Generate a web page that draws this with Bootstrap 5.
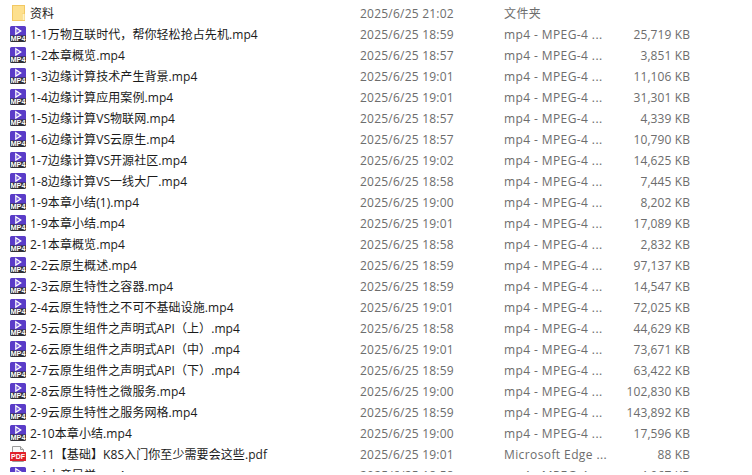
<!DOCTYPE html>
<html lang="zh-CN">
<head>
    <meta charset="UTF-8">
    <title>资料</title>
    <link href="https://cdn.jsdelivr.net/npm/bootstrap@5.3.0/dist/css/bootstrap.min.css" rel="stylesheet">
    <style>
        html, body { height: 100%; overflow: hidden; background: #fff; }
        body { font-family: "Open Sans", "Noto Sans CJK SC", sans-serif; font-size: 12px; line-height: 21px; }
        .file-list { height: 472px; overflow: hidden; padding-top: 3px; }
        .file-row { height: 21px; white-space: nowrap; }
        .file-icon { width: 16px; height: 16px; margin: 0 4px 1px 10px; flex: none; }
        .file-name { width: 330px; color: #1a1a1a; flex: none; letter-spacing: .08px; }
        .file-date { width: 144px; color: #6d6d6d; flex: none; letter-spacing: .22px; }
        .file-type { width: 116px; color: #6d6d6d; flex: none; letter-spacing: .4px; }
        .file-size { width: 70px; color: #6d6d6d; text-align: right; flex: none; letter-spacing: .1px; }
        .icon-label { font-family: "Liberation Sans", sans-serif; font-weight: 700; fill: #fff; }
    </style>
</head>
<body>
    <div class="file-list" id="files"></div>

    <svg width="0" height="0" class="d-block">
        <defs>
            <symbol id="i-folder" viewBox="0 0 16 16">
                <rect x="2.500" y=".5" width="12" height="15" fill="#fde08e" stroke="#f2c863"/>
                <path d="M12 15.500V8.500h3v7z" fill="#f6cf6c"/>
                <path d="M12.500 15V9h2v6z" fill="#fff2c4"/>
            </symbol>
            <symbol id="i-mp4" viewBox="0 0 16 16">
                <path d="M1.500 0h13A1.500 1.500 0 0 1 16 1.500V10H0V1.500A1.500 1.500 0 0 1 1.500 0z" fill="#5a3cc8"/>
                <path d="M5.800 1.700l5 3.200-5 3.200z" fill="#7a5ee0" stroke="#fff" stroke-width="1.200"/>
                <path d="M0 9.500h16v5A1.500 1.500 0 0 1 14.500 16h-13A1.500 1.500 0 0 1 0 14.500z" fill="#2f2f36"/>
                <text class="icon-label" x="8" y="15.200" font-size="6.500" text-anchor="middle" textLength="15" lengthAdjust="spacingAndGlyphs">MP4</text>
            </symbol>
            <symbol id="i-pdf" viewBox="0 0 16 16">
                <path d="M2.500.5h8l3 3v12h-11z" fill="#fafafa" stroke="#9c9c9c"/>
                <path d="M10.500.5v3h3" fill="#e4e4e4" stroke="#9c9c9c"/>
                <rect x="0" y="6" width="16" height="9" rx=".5" fill="#e0202a"/>
                <text class="icon-label" x="8" y="13.300" font-size="7.500" text-anchor="middle" textLength="14" lengthAdjust="spacingAndGlyphs">PDF</text>
            </symbol>
        </defs>
    </svg>

    <script>
        // name, date, type, size, icon
        const mp4 = 'mp4 - MPEG-4 ...';
        const rows = [
            ['资料', '2025/6/25 21:02', '文件夹', '', 'folder'],
            ['1-1万物互联时代，帮你轻松抢占先机.mp4', '2025/6/25 18:59', mp4, '25,719 KB'],
            ['1-2本章概览.mp4', '2025/6/25 18:57', mp4, '3,851 KB'],
            ['1-3边缘计算技术产生背景.mp4', '2025/6/25 19:01', mp4, '11,106 KB'],
            ['1-4边缘计算应用案例.mp4', '2025/6/25 19:01', mp4, '31,301 KB'],
            ['1-5边缘计算VS物联网.mp4', '2025/6/25 18:57', mp4, '4,339 KB'],
            ['1-6边缘计算VS云原生.mp4', '2025/6/25 18:57', mp4, '10,790 KB'],
            ['1-7边缘计算VS开源社区.mp4', '2025/6/25 19:02', mp4, '14,625 KB'],
            ['1-8边缘计算VS一线大厂.mp4', '2025/6/25 18:58', mp4, '7,445 KB'],
            ['1-9本章小结(1).mp4', '2025/6/25 19:00', mp4, '8,202 KB'],
            ['1-9本章小结.mp4', '2025/6/25 19:01', mp4, '17,089 KB'],
            ['2-1本章概览.mp4', '2025/6/25 18:58', mp4, '2,832 KB'],
            ['2-2云原生概述.mp4', '2025/6/25 18:59', mp4, '97,137 KB'],
            ['2-3云原生特性之容器.mp4', '2025/6/25 18:59', mp4, '14,547 KB'],
            ['2-4云原生特性之不可不基础设施.mp4', '2025/6/25 19:01', mp4, '72,025 KB'],
            ['2-5云原生组件之声明式API（上）.mp4', '2025/6/25 18:58', mp4, '44,629 KB'],
            ['2-6云原生组件之声明式API（中）.mp4', '2025/6/25 19:01', mp4, '73,671 KB'],
            ['2-7云原生组件之声明式API（下）.mp4', '2025/6/25 18:59', mp4, '63,422 KB'],
            ['2-8云原生特性之微服务.mp4', '2025/6/25 19:00', mp4, '102,830 KB'],
            ['2-9云原生特性之服务网格.mp4', '2025/6/25 18:59', mp4, '143,892 KB'],
            ['2-10本章小结.mp4', '2025/6/25 19:00', mp4, '17,596 KB'],
            ['2-11【基础】K8S入门你至少需要会这些.pdf', '2025/6/25 19:01', 'Microsoft Edge ...', '88 KB', 'pdf'],
            ['3-1本章导学.mp4', '2025/6/25 18:58', mp4, '4,067 KB']
        ];

        document.getElementById('files').innerHTML = rows.map(([name, date, type, size, icon]) => `
            <div class="file-row d-flex align-items-center">
                <svg class="file-icon"><use href="#i-${icon || 'mp4'}"></use></svg>
                <div class="file-name">${name}</div>
                <div class="file-date">${date}</div>
                <div class="file-type">${type}</div>
                <div class="file-size">${size}</div>
            </div>`).join('');
    </script>

    <script src="https://cdn.jsdelivr.net/npm/bootstrap@5.3.0/dist/js/bootstrap.bundle.min.js"></script>
</body>
</html>
